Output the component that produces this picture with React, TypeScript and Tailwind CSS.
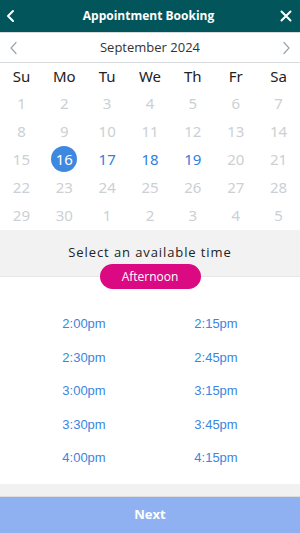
import React from "react";

const weekdays = ["Su", "Mo", "Tu", "We", "Th", "Fr", "Sa"];

type Day = { n: number; state: "off" | "open" | "selected" };

const weeks: Day[][] = [
  [1, 2, 3, 4, 5, 6, 7],
  [8, 9, 10, 11, 12, 13, 14],
  [15, 16, 17, 18, 19, 20, 21],
  [22, 23, 24, 25, 26, 27, 28],
  [29, 30, 1, 2, 3, 4, 5],
].map((row, r) =>
  row.map((n) => {
    if (r === 2 && n === 16) return { n, state: "selected" as const };
    if (r === 2 && (n === 17 || n === 18 || n === 19)) return { n, state: "open" as const };
    return { n, state: "off" as const };
  })
);

const times = [
  ["2:00pm", "2:15pm"],
  ["2:30pm", "2:45pm"],
  ["3:00pm", "3:15pm"],
  ["3:30pm", "3:45pm"],
  ["4:00pm", "4:15pm"],
];

const App: React.FC = () => {
  return (
    <div className="w-[300px] h-[533px] bg-white flex flex-col overflow-hidden font-['Open_Sans',sans-serif]">
      {/* header */}
      <div className="h-8 bg-[#01555b] flex items-center justify-between pl-[4px] pr-[7px] text-white">
        <svg width="14" height="14" viewBox="0 0 14 14" fill="none" stroke="white" strokeWidth="2" strokeLinecap="round" strokeLinejoin="round">
          <path d="M9 2 L4 7 L9 12" />
        </svg>
        <span className="text-[12px] font-bold">Appointment Booking</span>
        <svg width="14" height="14" viewBox="0 0 14 14" fill="none" stroke="white" strokeWidth="2" strokeLinecap="round">
          <path d="M2.5 2.5 L11.5 11.5 M11.5 2.5 L2.5 11.5" />
        </svg>
      </div>

      {/* month nav */}
      <div className="h-[31px] border-t border-[#d6dadd] border-b flex items-center justify-between px-[8px] pt-[1px]">
        <svg width="12" height="14" viewBox="0 0 12 14" fill="none" stroke="#9aa3aa" strokeWidth="1.2" strokeLinecap="round">
          <path d="M8 1.5 L3 7 L8 12.5" />
        </svg>
        <span className="text-[13px] text-[#333]">September 2024</span>
        <svg width="12" height="14" viewBox="0 0 12 14" fill="none" stroke="#9aa3aa" strokeWidth="1.2" strokeLinecap="round">
          <path d="M4 1.5 L9 7 L4 12.5" />
        </svg>
      </div>

      {/* calendar */}
      <div className="grid grid-cols-7 h-[26px] items-center text-center text-[15px] text-[#222] font-['Noto_Sans',sans-serif]">
        {weekdays.map((w) => (
          <span key={w}>{w}</span>
        ))}
      </div>
      <div className="flex flex-col pb-[1px]">
        {weeks.map((week, i) => (
          <div key={i} className="grid grid-cols-7 h-[28px] items-center text-center text-[15px] font-['Noto_Sans',sans-serif]">
            {week.map((d, j) => (
              <div key={j} className="flex justify-center">
                {d.state === "selected" ? (
                  <span className="w-[26px] h-[26px] rounded-full bg-[#3f88df] text-white flex items-center justify-center">
                    {d.n}
                  </span>
                ) : (
                  <span className={d.state === "open" ? "text-[#2f80e0]" : "text-[#cbd0d4]"}>{d.n}</span>
                )}
              </div>
            ))}
          </div>
        ))}
      </div>

      {/* time selector heading */}
      <div className="h-[47px] bg-[#f2f2f2] border-b border-[#e4e8ea] flex items-end justify-center pb-[14px]">
        <span className="text-[13px] tracking-[0.9px] text-[#222]">Select an available time</span>
      </div>
      <div className="flex justify-center -mt-[13px]">
        <span className="w-[101px] h-[25px] rounded-full bg-[#db0a83] text-white text-[12px] flex items-center justify-center">
          Afternoon
        </span>
      </div>

      {/* times */}
      <div className="flex-1 flex flex-col pt-[18px] px-[18px] font-['Liberation_Sans',sans-serif]">
        {times.map((row, i) => (
          <div key={i} className="grid grid-cols-2 h-[33.5px] items-center text-center text-[13px] text-[#3a86e0]">
            {row.map((t) => (
              <span key={t}>{t}</span>
            ))}
          </div>
        ))}
      </div>

      {/* footer */}
      <div className="h-[13px] bg-[#f1f1f1] border-b border-[#dcdcdc]" />
      <div className="h-[36px] bg-[#8fb1f2] flex items-center justify-center">
        <span className="text-white font-bold text-[13px]">Next</span>
      </div>
    </div>
  );
};

export default App;
